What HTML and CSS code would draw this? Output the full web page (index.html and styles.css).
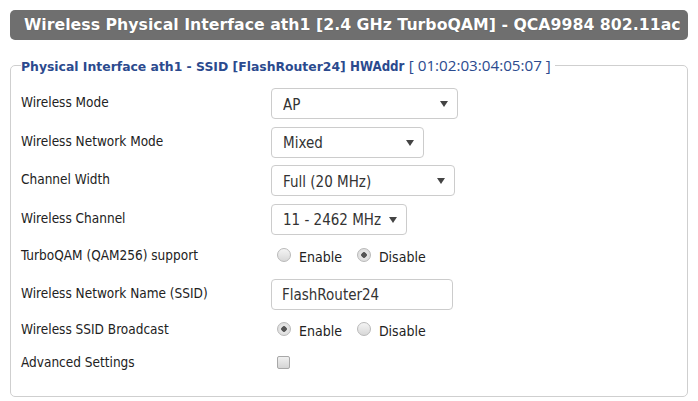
FILE: index.html
```html
<!DOCTYPE html>
<html lang="en">
<head>
    <meta charset="UTF-8">
    <title>Wireless Physical Interface ath1</title>
    <link rel="stylesheet" href="styles.css">
</head>
<body>
    <div class="page">
        <h2 class="section-title">Wireless Physical Interface ath1 [2.4 GHz TurboQAM] - QCA9984 802.11ac</h2>

        <fieldset class="iface">
            <legend>Physical Interface ath1 - SSID [FlashRouter24] <span class="hw">HWAddr</span> <span class="mac">[ 01:02:03:04:05:07 ]</span></legend>

            <div class="row">
                <label class="label">Wireless Mode</label>
                <span class="select w-mode">
                    <select><option>AP</option></select>
                    <svg class="arrow" viewBox="0 0 8 6"><path d="M0 0h8L4 6z"/></svg>
                </span>
            </div>

            <div class="row">
                <label class="label">Wireless Network Mode</label>
                <span class="select w-net">
                    <select><option>Mixed</option></select>
                    <svg class="arrow" viewBox="0 0 8 6"><path d="M0 0h8L4 6z"/></svg>
                </span>
            </div>

            <div class="row">
                <label class="label">Channel Width</label>
                <span class="select w-width">
                    <select><option>Full (20 MHz)</option></select>
                    <svg class="arrow" viewBox="0 0 8 6"><path d="M0 0h8L4 6z"/></svg>
                </span>
            </div>

            <div class="row">
                <label class="label">Wireless Channel</label>
                <span class="select w-chan">
                    <select><option>11 - 2462 MHz</option></select>
                    <svg class="arrow" viewBox="0 0 8 6"><path d="M0 0h8L4 6z"/></svg>
                </span>
            </div>

            <div class="row row-radio">
                <label class="label">TurboQAM (QAM256) support</label>
                <span class="choices">
                    <label><input type="radio" name="tqam"> Enable</label>
                    <label><input type="radio" name="tqam" checked> Disable</label>
                </span>
            </div>

            <div class="row">
                <label class="label">Wireless Network Name (SSID)</label>
                <input class="text" type="text" value="FlashRouter24">
            </div>

            <div class="row row-radio2">
                <label class="label">Wireless SSID Broadcast</label>
                <span class="choices">
                    <label><input type="radio" name="bcast" checked> Enable</label>
                    <label><input type="radio" name="bcast"> Disable</label>
                </span>
            </div>

            <div class="row row-check">
                <label class="label">Advanced Settings</label>
                <input class="check" type="checkbox">
            </div>
        </fieldset>
    </div>
</body>
</html>
```

FILE: styles.css
```css
body {
    margin: 0;
    background: #fff;
    font-family: "DejaVu Sans Condensed", Tahoma, "DejaVu Sans", sans-serif;
    color: #222;
}

.page {
    padding: 10px 10px 0 10px;
}

.section-title {
    margin: 0;
    height: 30px;
    line-height: 30px;
    padding-left: 14px;
    background: #6f6f6f;
    border-radius: 5px;
    color: #fff;
    font-family: "DejaVu Sans", Verdana, sans-serif;
    font-weight: bold;
    font-size: 15.75px;
    white-space: nowrap;
    text-shadow: 0 0 1px rgba(0,0,0,0.3);
}

.iface {
    margin: 15px 0 0 0;
    padding: 13px 10px 20px 10px;
    border: 1px solid #cfcfcf;
    border-radius: 5px;
}

.iface legend {
    padding: 0 4px 0 0;
    margin-left: 0;
    color: #2b4a8e;
    font-family: "DejaVu Sans", Verdana, sans-serif;
    font-weight: bold;
    font-size: 12.4px;
    white-space: nowrap;
}

.iface legend .hw {
    font-family: "DejaVu Sans Condensed", Tahoma, sans-serif;
    font-size: 13.2px;
}

.iface legend .mac {
    font-weight: normal;
    font-family: "Open Sans", sans-serif;
    font-size: 15.2px;
}

.row {
    display: flex;
    align-items: center;
    height: 31px;
    margin-bottom: 7.5px;
}

.row-radio { height: 29px; }
.row-radio2 { height: 27px; }
.row-check { height: 24px; margin-bottom: 0; }

.label {
    width: 250px;
    font-size: 13.5px;
    padding-bottom: 3px;
}

.select {
    position: relative;
    display: inline-block;
    height: 31px;
}

.select select {
    appearance: none;
    -webkit-appearance: none;
    width: 100%;
    height: 100%;
    border: 1px solid #cccccc;
    border-radius: 4px;
    background: #fff;
    padding: 2px 0 0 11px;
    font-family: "DejaVu Sans Condensed", Tahoma, sans-serif;
    font-size: 15px;
    color: #333;
    box-sizing: border-box;
}

.select .arrow {
    position: absolute;
    right: 10px;
    top: 13px;
    width: 8px;
    height: 6px;
    fill: #444;
}

.w-mode { width: 187px; }
.w-net { width: 153px; }
.w-width { width: 184px; }
.w-chan { width: 136px; }

.text {
    width: 182px;
    height: 31px;
    box-sizing: border-box;
    border: 1px solid #cccccc;
    border-radius: 4px;
    padding: 2px 0 0 10px;
    font-family: "DejaVu Sans Condensed", Tahoma, sans-serif;
    font-size: 15px;
    color: #333;
}

.choices {
    display: flex;
    gap: 15px;
    padding-left: 6px;
    font-size: 14px;
}

.choices label {
    display: flex;
    align-items: center;
    gap: 8px;
}

input[type="radio"] {
    appearance: none;
    -webkit-appearance: none;
    margin: 0 0 4px 0;
    width: 14px;
    height: 14px;
    border: 1px solid #b9b9b9;
    border-radius: 50%;
    background: linear-gradient(#f4f4f4, #d8d8d8);
    box-sizing: border-box;
}

input[type="radio"]:checked {
    background: radial-gradient(circle, #555 0, #555 2.5px, #e6e6e6 3px, #d8d8d8 100%);
}

.check {
    appearance: none;
    -webkit-appearance: none;
    margin: 0 0 3px 6px;
    width: 13px;
    height: 13px;
    border: 1px solid #a8a8a8;
    border-radius: 2px;
    background: linear-gradient(#f0f0f0, #d5d5d5);
    box-sizing: border-box;
}
```
